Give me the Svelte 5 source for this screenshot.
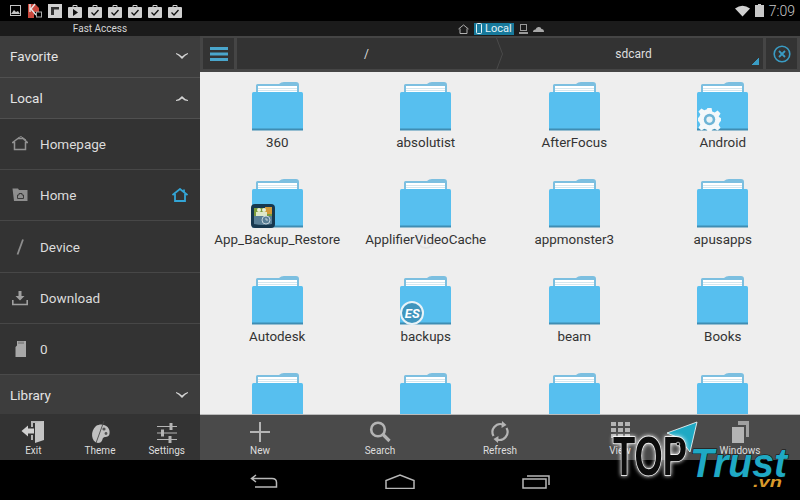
<script>
  const folders = [
    { name: '360' }, { name: 'absolutist' }, { name: 'AfterFocus' }, { name: 'Android', badge: 'gear' },
    { name: 'App_Backup_Restore', badge: 'backup' }, { name: 'ApplifierVideoCache', spinner: true }, { name: 'appmonster3' }, { name: 'apusapps' },
    { name: 'Autodesk' }, { name: 'backups', badge: 'es' }, { name: 'beam' }, { name: 'Books' },
    { name: '' }, { name: '' }, { name: '' }, { name: '' }
  ];
  const bags = ['play', 'check', 'check', 'check', 'check', 'check'];
  const places = [
    { label: 'Homepage', icon: 'house' },
    { label: 'Home', icon: 'folder', active: true },
    { label: 'Device', icon: 'slash' },
    { label: 'Download', icon: 'download' },
    { label: '0', icon: 'sd' }
  ];
  const leftTools = [{ label: 'Exit', icon: 'exit' }, { label: 'Theme', icon: 'theme' }, { label: 'Settings', icon: 'settings' }];
  const mainTools = [
    { label: 'New', icon: 'new' }, { label: 'Search', icon: 'search' }, { label: 'Refresh', icon: 'refresh' },
    { label: 'View', icon: 'view' }, { label: 'Windows', icon: 'windows' }
  ];
</script>

{#snippet chevron(up)}
  <svg class="chevron" viewBox="0 0 12 6" width="12" height="6">
    <path d={up ? 'M0 5Q3 4.5 6 1Q9 4.5 12 5V6Q8.5 6 6 3.5Q3.5 6 0 6Z' : 'M0 0Q3 0.5 6 3.5Q9 0.5 12 0V1Q9.5 2 6 6Q2.5 2 0 1Z'} fill="#d4d4d4" />
  </svg>
{/snippet}

{#snippet placeIcon(icon)}
  <svg viewBox="0 0 16 16" width="16" height="16" fill="#8e8e8e">
    {#if icon === 'house'}
      <path d="M0.5 6.5L6 2.5H11L15.5 6.5H13.5V13.5H2.5V6.5Z" fill="none" stroke="#929292" stroke-width="1.5" />
      <path d="M6 2L9 0.5L14 4" fill="none" stroke="#929292" stroke-width="1" />
    {:else if icon === 'folder'}
      <path d="M0.5 1.5H6L7 3H15.5V14H2Z" />
      <path d="M5.5 8H7V6.5H10V8H11.5V11.5H5.5Z" fill="none" stroke="#3a3a3a" />
    {:else if icon === 'slash'}
      <path d="M11 0.5L5.5 15.5" fill="none" stroke="#8e8e8e" stroke-width="1.8" />
    {:else if icon === 'download'}
      <path d="M6.5 1H9.5V6H12.5L8 10.5L3.5 6H6.5Z" fill="#a0a0a0" /><path d="M0.8 10V14.5H15.2V10" fill="none" stroke="#a0a0a0" stroke-width="1.6" />
    {:else if icon === 'sd'}
      <path d="M5 0H14V16H3.5V6L5 4.5Z" fill="#a8a8a8" />
      <path d="M7 0.5V3M9 0.5V3M11 0.5V3" stroke="#555" stroke-width="0.8" />
    {/if}
  </svg>
{/snippet}

{#snippet toolIcon(icon)}
  <svg viewBox="0 0 24 24" width="24" height="24" fill="#b4b4b4">
    {#if icon === 'exit'}
      <path d="M10 1H23V20H15V18H21V3H12V7H10Z" /><path d="M14 3L23 1V20L14 23Z" fill="#c4c4c4" />
      <path d="M0.5 11L7 5.5V8.5H13V13.5H7V16.5Z" fill="#d0d0d0" /><path d="M10 15H12V20H10Z" />
    {:else if icon === 'theme'}
      <path d="M8 6C14 2 23 6 21.5 14C20.5 18 17 16 15 18C14 20 14 23 10 23C3 22 2 11 8 6Z" fill="#c0c0c0" />
      <circle cx="16" cy="9" r="1.6" fill="#555" /><circle cx="18" cy="13.5" r="1.4" fill="#555" />
      <path d="M16 1L8 23" fill="none" stroke="#4a4a4a" stroke-width="0.9" />
    {:else if icon === 'settings'}
      <path d="M2 6.5H22M2 13H22M2 19.5H22" fill="none" stroke="#b4b4b4" stroke-width="1.2" />
      <rect x="14.5" y="3" width="3" height="7" /><rect x="6" y="9.5" width="3" height="7" /><rect x="13.5" y="16" width="3" height="7" />
    {:else if icon === 'new'}
      <path d="M11 2H13V11H22V13H13V22H11V13H2V11H11Z" />
    {:else if icon === 'search'}
      <circle cx="10" cy="9.5" r="6.8" fill="none" stroke="#b4b4b4" stroke-width="2.6" />
      <path d="M15 14.5L21.5 21" fill="none" stroke="#b4b4b4" stroke-width="3.2" />
    {:else if icon === 'refresh'}
      <path d="M5.5 16A8 8 0 0 1 15 4.5" fill="none" stroke="#b4b4b4" stroke-width="2.2" />
      <path d="M18.5 8A8 8 0 0 1 9 19.5" fill="none" stroke="#b4b4b4" stroke-width="2.2" />
      <path d="M14 1L18.5 5L13.5 8Z" /><path d="M10 23L5.5 19L10.5 16Z" />
    {:else if icon === 'view'}
      <path d="M3 2H8V6H3ZM10 2H15V6H10ZM17 2H22V6H17ZM3 8H8V12H3ZM10 8H15V12H10ZM17 8H22V12H17ZM3 14H8V18H3ZM10 14H15V18H10ZM17 14H22V18H17Z" />
    {:else if icon === 'windows'}
      <path d="M10 1H21V17H18V5H10Z" fill="#a0a0a0" /><path d="M4 7H16V23H4Z" />
    {/if}
  </svg>
{/snippet}

{#snippet folder(item)}
  <div class="folder">
    <svg viewBox="0 0 51 49" width="51" height="49">
      <path d="M4 10V3.5Q4 2 5.5 2H27Q29 0 32 0H44Q47 0 47 3V10Z" fill="#7cbfe0" />
      <rect x="6" y="4" width="39" height="7" fill="#fff" />
      <path d="M6 6.5H45M6 8.5H45" stroke="#c9dfea" stroke-width="0.8" />
      <path d="M0 11.5Q0 10 1.5 10H49.5Q51 10 51 11.5V48H0Z" fill="#57bfef" />
      <rect x="0" y="46.5" width="51" height="2" fill="#3f8db3" />
    </svg>
    {#if item.badge === 'gear'}
      <svg class="badge gear" viewBox="0 0 24 24" width="25" height="25">
        <path d="M10 1H14L14.6 4.2L17 5.2L19.8 3.4L22.6 6.2L20.8 9L21.8 10L23 10.5V13.5L21.8 14.6L20.8 17L22.6 19.8L19.8 22.6L17 20.8L14.6 21.8L14 23H10L9.4 21.8L7 20.8L4.2 22.6L1.4 19.8L3.2 17L2.2 14.6L1 13.5V10.5L2.2 9.4L3.2 7L1.4 4.2L4.2 1.4L7 3.2L9.4 2.2Z" fill="#f4f8fa" />
        <circle cx="12" cy="12" r="5.5" fill="#6db4d6" /><circle cx="12" cy="12" r="3" fill="#eaf4f8" />
      </svg>
    {:else if item.badge === 'backup'}
      <svg class="badge backup" viewBox="0 0 24 24" width="24" height="24">
        <rect width="24" height="24" rx="4" fill="#17384f" />
        <path d="M3 4H21V13H3Z" fill="#7d9c3c" /><path d="M14 3H21V10H14Z" fill="#d39a3a" />
        <circle cx="8" cy="6" r="2" fill="#e9efd8" /><circle cx="13" cy="6" r="2" fill="#e9efd8" /><path d="M5 8H16V12H5Z" fill="#dfe8c8" />
        <path d="M3 12H21V20Q12 22 3 20Z" fill="#5a7f96" /><circle cx="15" cy="16" r="4" fill="none" stroke="#c4d2da" /><path d="M15 14V16H17" fill="none" stroke="#c4d2da" />
      </svg>
    {:else if item.badge === 'es'}
      <div class="badge es"><span>ES</span></div>
    {/if}
  </div>
  {#if item.spinner}<div class="spinner"></div>{/if}
{/snippet}

<div class="screen">
  <div class="statusbar">
    <div class="notifs">
      <svg viewBox="0 0 12 12" width="12" height="12"><rect x="0.5" y="0.5" width="10" height="10" fill="none" stroke="#c4c4c4" /><path d="M1 9L4 5L6 7L8 6L10 9Z" fill="#c4c4c4" /></svg>
      <svg viewBox="0 0 14 15" width="14" height="15"><path d="M0 1H7L11 5V9H6V15H0Z" fill="#c9483d" /><path d="M2 1V9M7 1L3 6L8 12" fill="none" stroke="#e8e8e8" stroke-width="1.4" /><rect x="8.5" y="9" width="5" height="5" fill="none" stroke="#aaa" /></svg>
      <svg viewBox="0 0 14 14" width="14" height="14"><rect width="14" height="14" fill="#d0d0d0" /><path d="M3 3H11V5.5H6V11H3Z" fill="#333" /></svg>
      {#each bags as bag}
        <svg viewBox="0 0 14 14" width="14" height="14">
          <path d="M5 3V1.5H9V3" fill="none" stroke="#d0d0d0" /><rect y="3" width="14" height="11" rx="1" fill="#d0d0d0" />
          {#if bag === 'play'}<path d="M5 5L10 8.5L5 12Z" fill="#111" />{:else}<path d="M3.5 8.5L6 11L10.5 6" fill="none" stroke="#111" stroke-width="1.3" />{/if}
        </svg>
      {/each}
    </div>
    <div class="sys">
      <svg viewBox="0 0 15 12" width="15" height="12"><path d="M7.5 11.5L0 3.5Q7.5 -2 15 3.5Z" fill="#d0d0d0" /></svg>
      <svg viewBox="0 0 9 13" width="9" height="13"><path d="M3 0H6V1H9V13H0V1H3Z" fill="#c8c8c8" /></svg>
      <span class="time">7:09</span>
    </div>
  </div>

  <div class="fastbar">
    <div class="fast-title">Fast Access</div>
    <div class="locations">
      <svg viewBox="0 0 11 10" width="11" height="10"><path d="M0.5 5L5.5 1L10.5 5M2 4.5V9.5H9V4.5" fill="none" stroke="#b0b0b0" /></svg>
      <div class="local">
        <svg viewBox="0 0 6 11" width="6" height="11"><rect x="0.5" y="0.5" width="5" height="10" rx="1" fill="none" stroke="#e4f2f7" /></svg>
        <span>Local</span>
      </div>
      <svg viewBox="0 0 9 10" width="9" height="10"><rect x="1.5" y="0.5" width="6" height="6" fill="none" stroke="#9a9a9a" /><rect y="8" width="9" height="2" fill="#9a9a9a" /></svg>
      <svg viewBox="0 0 11 6" width="11" height="6"><path d="M0 6Q0 3.5 2.5 3.5Q3.5 0.5 6 1Q8 1 8.5 3Q11 3 11 6Z" fill="#a8a8a8" /></svg>
    </div>
  </div>

  <div class="body">
    <aside class="sidebar">
      <div class="section first">Favorite {@render chevron(false)}</div>
      <div class="section">Local {@render chevron(true)}</div>
      <div class="places">
        {#each places as place}
          <div class="place">
            {@render placeIcon(place.icon)}
            <span>{place.label}</span>
            {#if place.active}
              <svg class="home-mark" viewBox="0 0 16 14" width="16" height="14"><path d="M0.5 7L8 1L15.5 7M3 6V13H13V6" fill="none" stroke="#33a5d6" stroke-width="1.8" /><path d="M12 1.5V4" stroke="#33a5d6" stroke-width="1.8" /></svg>
            {/if}
          </div>
        {/each}
      </div>
      <div class="section library">Library {@render chevron(false)}</div>
      <div class="tools left-tools">
        {#each leftTools as tool}
          <div class="tool">{@render toolIcon(tool.icon)}<span>{tool.label}</span></div>
        {/each}
      </div>
    </aside>

    <main class="main">
      <div class="toolbar">
        <button class="square" aria-label="Menu">
          <svg viewBox="0 0 18 14" width="18" height="14"><path d="M0 0H18V3H0ZM0 5.5H18V8.5H0ZM0 11H18V14H0Z" fill="#4aa6cc" /></svg>
        </button>
        <div class="path">
          <div class="crumb">/</div>
          <svg class="sep" viewBox="0 0 8 32" width="8" height="32"><path d="M0.5 0L6.5 16L0.5 32" fill="none" stroke="#4a4a4a" /></svg>
          <div class="crumb">sdcard</div>
          <div class="corner"></div>
        </div>
        <button class="square" aria-label="Close">
          <svg viewBox="0 0 18 18" width="18" height="18"><circle cx="9" cy="9" r="7.8" fill="none" stroke="#3a9cc4" stroke-width="1.6" /><path d="M6 6L12 12M12 6L6 12" stroke="#3a9cc4" stroke-width="1.8" /></svg>
        </button>
      </div>

      <div class="grid">
        {#each folders as item}
          <div class="cell">
            {@render folder(item)}
            <div class="name">{item.name}</div>
          </div>
        {/each}
      </div>

      <div class="tools main-tools">
        {#each mainTools as tool}
          <div class="tool">{@render toolIcon(tool.icon)}<span>{tool.label}</span></div>
        {/each}
      </div>
    </main>
  </div>

  <nav class="navbar">
    <svg viewBox="0 0 28 14" width="28" height="14"><path d="M6 1L1.5 4.5L6 8M1.5 4.5H22Q26.5 4.5 26.5 8.5V13H5" fill="none" stroke="#b8b8b8" stroke-width="1.5" /></svg>
    <svg viewBox="0 0 30 15" width="30" height="15"><path d="M1 14.5V6.5L15 1L29 6.5V14.5Z" fill="none" stroke="#b8b8b8" stroke-width="1.5" /></svg>
    <svg viewBox="0 0 28 15" width="28" height="15"><rect x="1" y="5" width="23" height="9" fill="none" stroke="#b8b8b8" stroke-width="1.5" /><path d="M5 2H27V11" fill="none" stroke="#b8b8b8" stroke-width="1.5" /></svg>
  </nav>

  <svg class="watermark" viewBox="0 0 190 78" width="190" height="78">
    <path d="M89 2L59 13L71 18L82 32Z" fill="#1fa9c4" stroke="#fff" stroke-width="0.8" />
    <text class="wm-top" x="5" y="55" textLength="74" lengthAdjust="spacingAndGlyphs">TOP</text>
    <circle cx="70" cy="24" r="1.8" fill="#111" stroke="#ddd" stroke-width="0.8" />
    <text class="wm-trust" x="82" y="57" textLength="97" lengthAdjust="spacingAndGlyphs">Trust</text>
    <text class="wm-vn" x="145" y="67" textLength="29" lengthAdjust="spacingAndGlyphs">.vn</text>
  </svg>
</div>

<style>
  :global(body) {
    margin: 0;
    background: #000;
  }

  .screen {
    position: relative;
    width: 800px;
    height: 500px;
    overflow: hidden;
    display: flex;
    flex-direction: column;
    font-family: Roboto, "Liberation Sans", sans-serif;
    background: #000;
  }

  svg {
    flex: none;
    display: block;
  }

  .statusbar {
    height: 21px;
    flex: none;
    display: flex;
    align-items: center;
    justify-content: space-between;
    padding: 0 5px 0 10px;
  }

  .notifs {
    display: flex;
    align-items: center;
    gap: 6px;
  }

  .sys {
    display: flex;
    align-items: center;
    gap: 5px;
  }

  .time {
    color: #c8c8c8;
    font-size: 14px;
    font-weight: 300;
  }

  .fastbar {
    height: 15px;
    flex: none;
    display: flex;
    align-items: center;
    background: #1b1b1b;
    color: #d4d4d4;
    font-size: 10px;
  }

  .fast-title {
    width: 200px;
    text-align: center;
  }

  .locations {
    margin-left: 258px;
    display: flex;
    align-items: center;
    gap: 5px;
  }

  .local {
    display: flex;
    align-items: center;
    gap: 3px;
    height: 12px;
    padding: 0 2px 0 2px;
    background: #17799b;
    color: #e4f2f7;
    font-size: 11px;
  }

  .body {
    height: 424px;
    flex: none;
    display: flex;
  }

  .sidebar {
    width: 200px;
    flex: none;
    display: flex;
    flex-direction: column;
    background: #333;
    color: #dcdcdc;
  }

  .section {
    height: 41px;
    flex: none;
    box-sizing: border-box;
    display: flex;
    align-items: center;
    justify-content: space-between;
    padding: 0 12px 0 10px;
    background: #3d3d3d;
    border-bottom: 1px solid #505050;
    font-size: 13.5px;
    color: #e4e4e4;
  }

  .first {
    height: 42px;
    padding-bottom: 2px;
  }

  .library {
    height: 40px;
    border-bottom: none;
    border-top: 1px solid #4a4a4a;
  }

  .places {
    flex: 1;
    display: flex;
    flex-direction: column;
  }

  .place {
    flex: 1;
    display: flex;
    align-items: center;
    gap: 12px;
    padding: 0 12px;
    font-size: 13.5px;
    border-bottom: 1px solid #474747;
  }

  .place:last-child {
    border-bottom: none;
  }

  .home-mark {
    margin-left: auto;
  }

  .tools {
    height: 46px;
    flex: none;
    display: flex;
    align-items: stretch;
  }

  .left-tools {
    background: #333;
  }

  .main-tools {
    background: #4a4a4a;
    border-top: 1px solid #bbb;
    height: 45px;
  }

  .tool {
    flex: 1;
    display: flex;
    flex-direction: column;
    align-items: center;
    justify-content: flex-end;
    padding-bottom: 3px;
    gap: 1px;
    color: #dedede;
    font-size: 10px;
    line-height: 12px;
  }

  .main {
    flex: 1;
    min-width: 0;
    display: flex;
    flex-direction: column;
    background: #eee;
  }

  .toolbar {
    height: 36px;
    flex: none;
    box-sizing: border-box;
    display: flex;
    gap: 3px;
    padding: 2px 3px 3px;
    background: #454545;
  }

  .square {
    width: 31px;
    padding: 0;
    border: none;
    display: flex;
    align-items: center;
    justify-content: center;
    background: #333;
  }

  .path {
    flex: 1;
    position: relative;
    display: flex;
    align-items: center;
    background: #333;
    color: #dedede;
    font-size: 12px;
  }

  .crumb {
    flex: 1;
    text-align: center;
  }

  .corner {
    position: absolute;
    right: 4px;
    bottom: 4px;
    width: 7px;
    height: 7px;
    background: linear-gradient(135deg, transparent 50%, #3a9cc4 50%);
  }

  .grid {
    height: 342px;
    flex: none;
    overflow: hidden;
    display: grid;
    grid-template-columns: repeat(4, 1fr);
    grid-auto-rows: 97px;
    padding: 10px 3px 0;
    box-sizing: border-box;
  }

  .cell {
    position: relative;
    display: flex;
    flex-direction: column;
    align-items: center;
  }

  .folder {
    position: relative;
    width: 51px;
    height: 49px;
  }

  .name {
    position: relative;
    margin-top: 3px;
    font-size: 13.4px;
    line-height: 18px;
    color: #333;
    white-space: nowrap;
  }

  .badge {
    position: absolute;
    left: -1px;
    bottom: 0;
  }

  .gear {
    left: 0;
    bottom: -1px;
  }

  .es {
    left: 0;
    bottom: 0;
    width: 24px;
    height: 24px;
    box-sizing: border-box;
    border-radius: 50%;
    border: 2px solid #e8f3f8;
    background: #3f95bd;
    display: flex;
    align-items: center;
    justify-content: center;
    color: #fff;
    font-size: 13px;
    font-weight: 700;
    font-style: italic;
  }

  .spinner {
    position: absolute;
    left: 50%;
    top: 50px;
    width: 20px;
    height: 20px;
    margin-left: -10px;
    border-radius: 50%;
    box-sizing: border-box;
    border: 2px solid #e4e4e4;
    border-top-color: transparent;
  }

  .navbar {
    height: 40px;
    flex: none;
    display: flex;
    align-items: center;
    justify-content: center;
    gap: 107px;
    padding-top: 2px;
    box-sizing: border-box;
  }

  .watermark {
    position: absolute;
    left: 608px;
    top: 420px;
    overflow: visible;
  }

  .wm-top {
    font-family: "Liberation Sans", sans-serif;
    font-size: 55px;
    font-weight: 700;
    fill: #0c0c0c;
    stroke: #fff;
    stroke-width: 1.5px;
    paint-order: stroke;
    filter: drop-shadow(0 0 2px #fff);
  }

  .wm-trust {
    font-family: "Liberation Sans", sans-serif;
    font-size: 40px;
    font-weight: 700;
    font-style: italic;
    fill: #1fa9c4;
    stroke: #0a0a0a;
    stroke-width: 1px;
    paint-order: stroke;
  }

  .wm-vn {
    font-family: "Liberation Sans", sans-serif;
    font-size: 15px;
    font-weight: 700;
    font-style: italic;
    fill: #d99a2b;
  }
</style>
